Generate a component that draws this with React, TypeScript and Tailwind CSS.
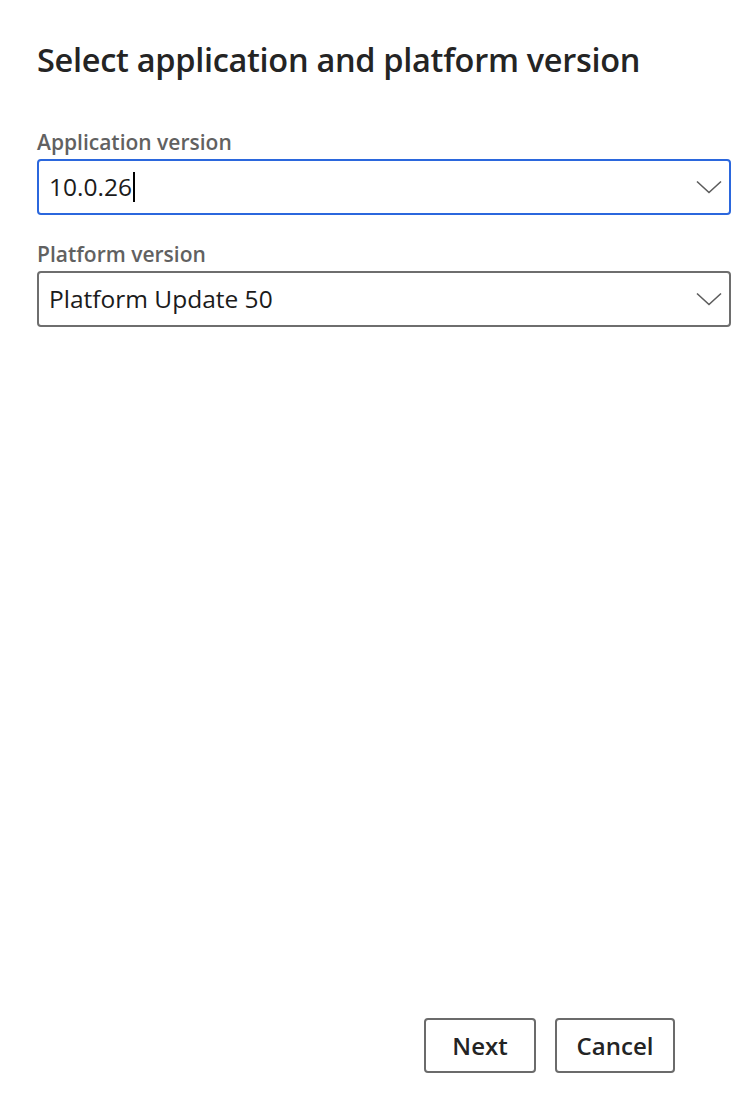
import React, { useState } from 'react';

const font = { fontFamily: '"Open Sans", "Noto Sans", sans-serif' };

const Chevron: React.FC = () => (
  <svg width="26" height="14" viewBox="0 0 26 14" fill="none" className="shrink-0">
    <path d="M1 1.5 L13 12.5 L25 1.5" stroke="#5c5c5c" strokeWidth="1.6" />
  </svg>
);

interface SelectBoxProps {
  label: string;
  value: string;
  focused?: boolean;
}

const SelectBox: React.FC<SelectBoxProps> = ({ label, value, focused }) => (
  <div className="flex flex-col">
    <label className="text-[21px] font-semibold text-[#616161] leading-[26px] mb-[4px]">{label}</label>
    <div
      className={
        focused
          ? 'flex items-center justify-between h-[56px] pl-[10px] pr-[7px] rounded-[4px] border-2 border-[#2b67dd] bg-white'
          : 'flex items-center justify-between h-[56px] pl-[10px] pr-[7px] rounded-[4px] border-2 border-[#6e6e6e] bg-white'
      }
    >
      <span className="text-[24.5px] text-[#1b1b1b] flex items-center">
        {value}
        {focused && <span className="inline-block w-[2px] h-[30px] bg-black ml-[1px]" />}
      </span>
      <Chevron />
    </div>
  </div>
);

const App: React.FC = () => {
  const [appVersion] = useState<string>('10.0.26');
  const [platformVersion] = useState<string>('Platform Update 50');

  return (
    <div className="w-[747px] h-[1100px] bg-white flex flex-col px-[37px] pr-[16px]" style={font}>
      <h1 className="text-[32.5px] font-semibold text-[#242424] mt-[38px] leading-[44px] tracking-[-0.3px]">
        Select application and platform version
      </h1>

      <div className="flex flex-col gap-[26px] mt-[47px]">
        <SelectBox label="Application version" value={appVersion} focused />
        <SelectBox label="Platform version" value={platformVersion} />
      </div>

      <div className="flex-1" />

      <div className="flex justify-end gap-[19px] pr-[56px] mb-[27px]">
        <button className="w-[112px] h-[55px] rounded-[4px] border-2 border-[#6b6b6b] bg-white text-[24px] font-semibold text-[#242424]">
          Next
        </button>
        <button className="w-[120px] h-[55px] rounded-[4px] border-2 border-[#6b6b6b] bg-white text-[24px] font-semibold text-[#242424]">
          Cancel
        </button>
      </div>
    </div>
  );
};

export default App;
